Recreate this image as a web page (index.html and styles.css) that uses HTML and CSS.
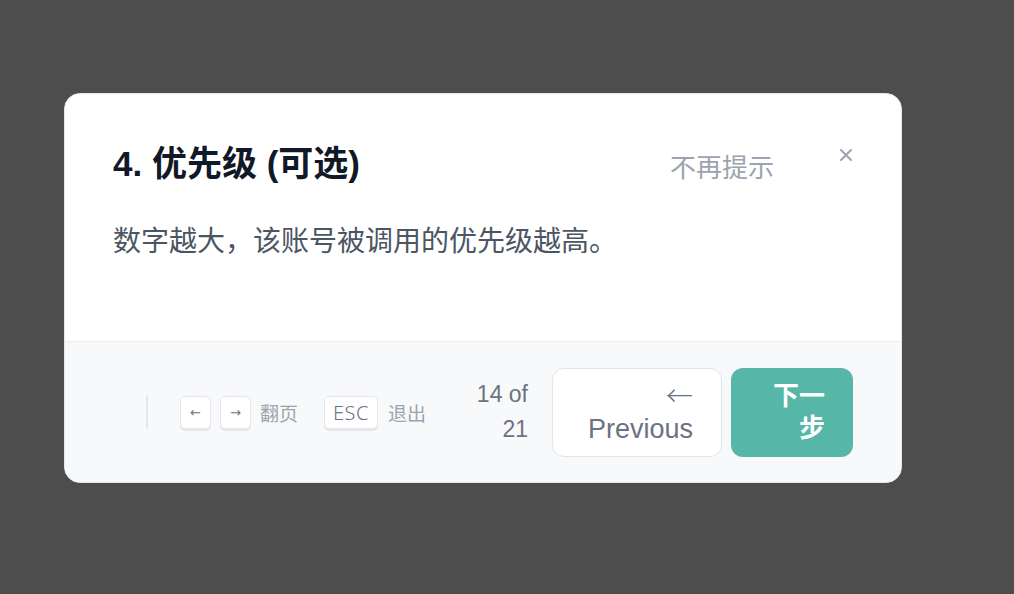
FILE: index.html
```html
<!DOCTYPE html>
<html lang="zh-CN">
<head>
    <meta charset="UTF-8">
    <meta name="viewport" content="width=device-width, initial-scale=1.0">
    <title>引导提示</title>
    <link rel="stylesheet" href="styles.css">
</head>
<body>
    <div class="tour">
        <div class="tour-main">
            <div class="tour-head">
                <h2 class="tour-title">4. 优先级 (可选)</h2>
                <button class="skip">不再提示</button>
                <button class="close" aria-label="关闭">
                    <svg width="12" height="12" viewBox="0 0 12 12">
                        <path d="M1 1L11 11M11 1L1 11" stroke="#9ca3af" stroke-width="2" stroke-linecap="round"/>
                    </svg>
                </button>
            </div>
            <p class="tour-text">数字越大，该账号被调用的优先级越高。</p>
        </div>
        <div class="tour-foot">
            <div class="hints">
                <span class="divider"></span>
                <kbd class="key">&larr;</kbd>
                <kbd class="key">&rarr;</kbd>
                <span class="hint-label">翻页</span>
                <kbd class="key key-esc">ESC</kbd>
                <span class="hint-label">退出</span>
            </div>
            <div class="nav">
                <span class="progress">14 of 21</span>
                <button class="btn btn-prev"><span class="arrow">&larr;</span> Previous</button>
                <button class="btn btn-next">下一步</button>
            </div>
        </div>
    </div>
</body>
</html>
```

FILE: styles.css
```css
body {
    margin: 0;
    padding: 93px 0 0 64px;
    height: 100vh;
    box-sizing: border-box;
    background: #4d4d4d;
    font-family: "Liberation Sans", "Noto Sans CJK SC", sans-serif;
}

.tour {
    width: 838px;
    height: 390px;
    box-sizing: border-box;
    background: #fff;
    border: 1px solid #e5e7eb;
    border-radius: 16px;
    overflow: hidden;
    display: flex;
    flex-direction: column;
}

.tour-main {
    padding: 49px 48px 0 48px;
    height: 248px;
    box-sizing: border-box;
    border-bottom: 1px solid #eceef2;
}

.tour-head {
    display: flex;
    align-items: center;
    height: 42px;
}

.tour-title {
    margin: 0;
    flex: 1;
    font-size: 35px;
    font-weight: 700;
    color: #111827;
    line-height: 42px;
}

button {
    font-family: inherit;
    border: none;
    background: none;
    padding: 0;
    cursor: pointer;
}

.skip {
    font-size: 26px;
    color: #9ca3af;
    margin-top: 2px;
}

.close {
    margin-left: 65px;
    width: 14px;
    height: 14px;
    display: flex;
    align-items: center;
    justify-content: center;
    align-self: flex-start;
    margin-top: 5px;
}

.tour-text {
    margin: 36px 0 0;
    font-size: 28px;
    line-height: 42px;
    color: #4b5563;
}

.tour-foot {
    flex: 1;
    background: #f8f9fb;
    display: flex;
    align-items: center;
    justify-content: space-between;
    padding: 0 48px 0 81px;
}

.hints {
    display: flex;
    align-items: center;
}

.divider {
    width: 2px;
    height: 34px;
    background: #e5e7eb;
    margin-right: 32px;
}

.key {
    min-width: 31px;
    height: 33px;
    box-sizing: border-box;
    display: inline-flex;
    align-items: center;
    justify-content: center;
    background: #fff;
    border: 1.5px solid #e5e7eb;
    border-radius: 5px;
    box-shadow: 0 2px 0 #e5e7eb;
    font-family: "DejaVu Sans", sans-serif;
    font-size: 13px;
    color: #6b7280;
    margin-right: 9px;
}

.key-esc {
    min-width: 54px;
    margin-left: 26px;
    margin-right: 10px;
    font-family: "Noto Sans", sans-serif;
    font-size: 20px;
    font-weight: 300;
    letter-spacing: 0.5px;
}

.hint-label {
    font-size: 19px;
    color: #9ca3af;
}

.nav {
    display: flex;
    align-items: center;
}

.progress {
    width: 58px;
    text-align: right;
    font-size: 23px;
    line-height: 35px;
    font-weight: 500;
    color: #6b7280;
    margin-right: 24px;
}

.btn {
    height: 89px;
    box-sizing: border-box;
    border-radius: 12px;
    font-size: 26px;
    line-height: 32px;
    text-align: right;
}

.btn-prev {
    width: 170px;
    padding: 0 28px 0 34px;
    background: #fff;
    border: 1.5px solid #e2e4e9;
    color: #6b7280;
    font-size: 27px;
}

.arrow {
    font-family: "Noto Sans CJK SC", sans-serif;
    font-weight: 300;
}

.btn-next {
    width: 122px;
    margin-left: 9px;
    padding: 0 28px 0 40px;
    background: #56b6a8;
    color: #fff;
    font-weight: 700;
}
```
